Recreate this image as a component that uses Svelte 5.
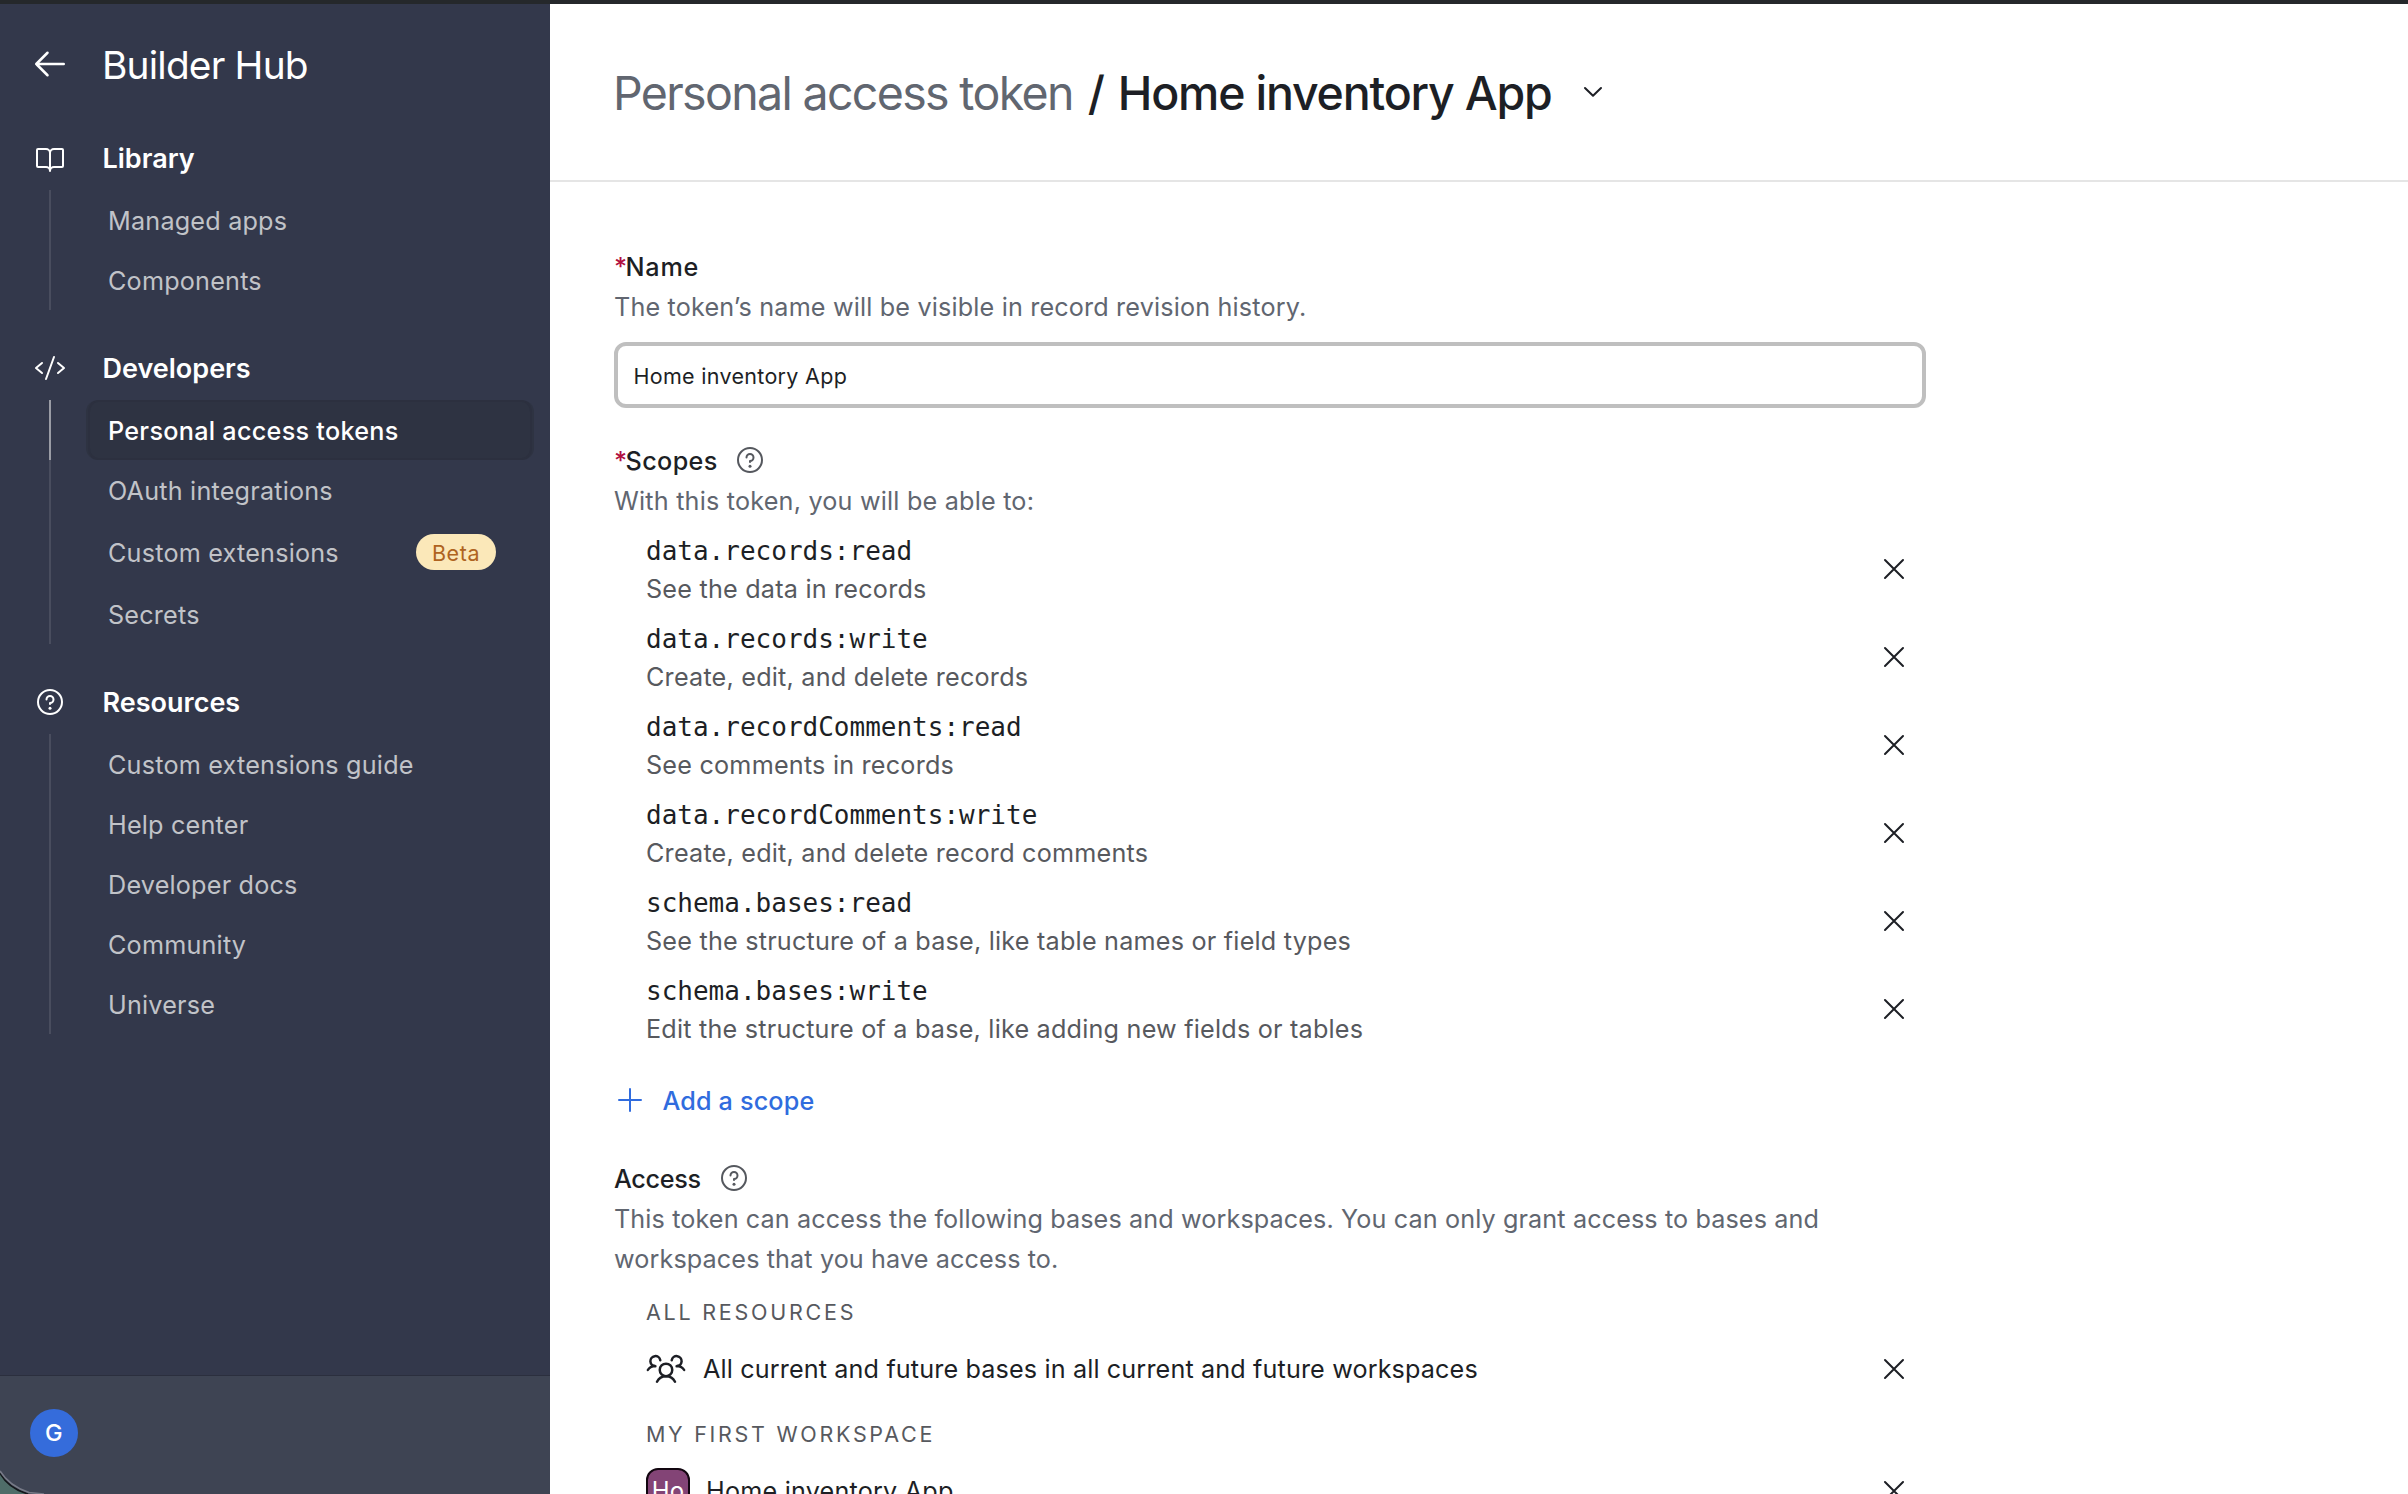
<script>
  const groups = [
    {
      title: 'Library',
      icon: 'book',
      items: [{ label: 'Managed apps' }, { label: 'Components' }]
    },
    {
      title: 'Developers',
      icon: 'code',
      items: [
        { label: 'Personal access tokens', active: true },
        { label: 'OAuth integrations' },
        { label: 'Custom extensions', badge: 'Beta' },
        { label: 'Secrets' }
      ]
    },
    {
      title: 'Resources',
      icon: 'help',
      items: [
        { label: 'Custom extensions guide' },
        { label: 'Help center' },
        { label: 'Developer docs' },
        { label: 'Community' },
        { label: 'Universe' }
      ]
    }
  ];

  const scopes = [
    { name: 'data.records:read', description: 'See the data in records' },
    { name: 'data.records:write', description: 'Create, edit, and delete records' },
    { name: 'data.recordComments:read', description: 'See comments in records' },
    { name: 'data.recordComments:write', description: 'Create, edit, and delete record comments' },
    { name: 'schema.bases:read', description: 'See the structure of a base, like table names or field types' },
    { name: 'schema.bases:write', description: 'Edit the structure of a base, like adding new fields or tables' }
  ];

  let tokenName = $state('Home inventory App');
</script>

{#snippet icon(name)}
  <svg class="icon icon-{name}" viewBox="0 0 256 256" aria-hidden="true">
    {#if name === 'arrow'}
      <path d="M216 128H40M112 56l-72 72 72 72" />
    {:else if name === 'book'}
      <path d="M128 88a32 32 0 0 1 32-32h64a8 8 0 0 1 8 8v128a8 8 0 0 1-8 8h-64a32 32 0 0 0-32 32M24 192a8 8 0 0 0 8 8h64a32 32 0 0 1 32 32V88a32 32 0 0 0-32-32H32a8 8 0 0 0-8 8z" />
    {:else if name === 'code'}
      <path d="M64 88l-48 40 48 40M192 88l48 40-48 40M160 40L96 216" />
    {:else if name === 'help'}
      <circle cx="128" cy="128" r="96" />
      <path d="M128 144v-8a28 28 0 1 0-28-28" />
      <circle class="dot" cx="128" cy="178" r="12" />
    {:else if name === 'plus'}
      <path d="M40 128h176M128 40v176" />
    {:else if name === 'close'}
      <path d="M200 56L56 200M200 200L56 56" />
    {:else if name === 'people'}
      <circle cx="128" cy="140" r="40" />
      <path d="M196 116a59.8 59.8 0 0 1 48 24M12 140a59.8 59.8 0 0 1 48-24M70.4 216a64.1 64.1 0 0 1 115.2 0M60 116a32 32 0 1 1 31.4-38M164.6 78a32 32 0 1 1 31.4 38" />
    {/if}
  </svg>
{/snippet}

<div class="page">
  <aside class="sidebar">
    <div class="brand">
      {@render icon('arrow')}
      <span>Builder Hub</span>
    </div>

    <nav>
      {#each groups as group}
        <section class="group">
          <div class="group-title">
            {@render icon(group.icon)}
            <span>{group.title}</span>
          </div>
          <ul>
            {#each group.items as item}
              <li class:active={item.active} class:with-badge={item.badge}>
                <div class="item">
                  <span>{item.label}</span>
                  {#if item.badge}<span class="badge">{item.badge}</span>{/if}
                </div>
              </li>
            {/each}
          </ul>
        </section>
      {/each}
    </nav>

    <footer>
      <div class="avatar">G</div>
    </footer>

    <!-- desktop showing behind the rounded window corner -->
    <svg class="corner" viewBox="0 0 44 26" aria-hidden="true">
      <path class="desktop" d="M0 5Q8 20 28 26H0z" />
      <path class="edge" d="M0 5Q8 20 28 26" />
      <path class="rim" d="M0 3Q9 18 29 24.5L44 26" />
    </svg>
  </aside>

  <main>
    <header>
      <span class="crumb">Personal access token</span>
      <span class="slash">/</span>
      <span class="title">Home inventory App</span>
      <svg class="chevron" viewBox="0 0 20 12" aria-hidden="true"><path d="M2 2l8 7.8L18 2" /></svg>
    </header>

    <div class="content">
      <div class="label name-label"><span class="star">*</span>Name</div>
      <p class="hint history">The token’s name will be visible in record revision history.</p>
      <input type="text" bind:value={tokenName} />

      <div class="label scopes-label"><span class="star">*</span>Scopes {@render icon('help')}</div>
      <p class="hint">With this token, you will be able to:</p>

      <div class="scopes">
        {#each scopes as scope}
          <div class="scope">
            <div>
              <code>{scope.name}</code>
              <p>{scope.description}</p>
            </div>
            {@render icon('close')}
          </div>
        {/each}
      </div>

      <div class="add">{@render icon('plus')}<span>Add a scope</span></div>

      <div class="label access-label">Access {@render icon('help')}</div>
      <p class="hint access-hint">
        This token can access the following bases and workspaces. You can only grant access to bases and workspaces that you have access to.
      </p>

      <h3>ALL RESOURCES</h3>
      <div class="resource">
        {@render icon('people')}
        <span class="resource-name all">All current and future bases in all current and future workspaces</span>
        {@render icon('close')}
      </div>
      <h3 class="second">MY FIRST WORKSPACE</h3>
      <div class="resource">
        <div class="base">Ho</div>
        <span class="resource-name">Home inventory App</span>
        {@render icon('close')}
      </div>
    </div>
  </main>
</div>

<style>
  :global(body) {
    overflow: hidden;
    background: #fff;
  }

  .page {
    box-sizing: border-box;
    display: flex;
    height: 1494px;
    overflow: hidden;
    border-top: 4px solid #25282b;
    font-family: Inter, 'Liberation Sans', sans-serif;
    font-size: 25.2px;
    font-weight: 400;
    line-height: 40px;
    letter-spacing: 0.2px;
    color: #1d1f25;
  }

  p,
  h3,
  ul {
    margin: 0;
    padding: 0;
    list-style: none;
  }

  .icon {
    display: block;
    flex: none;
    width: 32px;
    height: 32px;
    fill: none;
    stroke: currentColor;
    stroke-width: 16;
    stroke-linecap: round;
    stroke-linejoin: round;
  }

  .dot {
    fill: currentColor;
    stroke: none;
  }

  .icon-arrow,
  .icon-people {
    width: 40px;
    height: 40px;
  }

  /* Sidebar */
  .sidebar {
    position: relative;
    display: flex;
    flex: none;
    flex-direction: column;
    width: 550px;
    background: #33384b;
    color: #fff;
  }

  .brand {
    display: flex;
    gap: 32px;
    height: 48px;
    padding: 37px 0 0 30px;
    font-size: 38.8px;
    line-height: 47px;
    letter-spacing: -0.8px;
  }

  .icon-arrow {
    margin-top: 3px;
  }

  nav {
    display: flex;
    flex-direction: column;
    gap: 39px;
    padding-top: 50px;
  }

  .group-title {
    display: flex;
    gap: 36.5px;
    height: 51px;
    padding-left: 34px;
    font-size: 27px;
    font-weight: 600;
    letter-spacing: 0;
  }

  .group-title :global(.icon) {
    margin-top: 3px;
  }

  li {
    box-sizing: border-box;
    height: 60px;
    margin-left: 49px;
    padding-left: 35px;
    border-left: 2px solid #494d5e;
    color: #c1c3c8;
  }

  .with-badge {
    height: 64px;
  }

  .item {
    box-sizing: border-box;
    display: flex;
    align-items: center;
    justify-content: space-between;
    width: 448px;
    height: 100%;
    padding: 2px 36px 0 20px;
    border: solid transparent;
    border-width: 0 2px;
    border-radius: 12px;
  }

  .active {
    border-color: #9a9ca5;
    font-weight: 500;
    letter-spacing: 0.28px;
    color: #fff;
  }

  .active .item {
    background: #2e3342;
    box-shadow: inset 0 0 0 2px #2c303f;
  }

  .badge {
    box-sizing: border-box;
    width: 80px;
    height: 36px;
    margin-top: -2px;
    border-radius: 18px;
    background: #fbe8b9;
    font-size: 21.5px;
    line-height: 38px;
    letter-spacing: 0.6px;
    text-align: center;
    color: #af6320;
  }

  footer {
    box-sizing: border-box;
    height: 119px;
    margin-top: auto;
    padding: 33px 0 0 30px;
    border-top: 1px solid #2b2f3e;
    background: #3e4453;
  }

  .avatar {
    width: 48px;
    height: 48px;
    border-radius: 50%;
    background: #356cdb;
    font-size: 23.5px;
    font-weight: 500;
    line-height: 47px;
    text-align: center;
  }

  .corner {
    position: absolute;
    bottom: 0;
    left: 0;
    width: 44px;
    height: 26px;
    fill: none;
  }

  .desktop {
    fill: #4f6d69;
  }

  .edge {
    stroke: #14181c;
    stroke-width: 1.6;
  }

  .rim {
    stroke: #777a87;
    stroke-width: 1.6;
  }

  /* Main column */
  main {
    flex: 1;
    min-width: 0;
  }

  header {
    box-sizing: border-box;
    display: flex;
    height: 178px;
    padding: 59px 0 0 63px;
    border-bottom: 2px solid #e5e5e5;
    font-size: 46.5px;
    font-weight: 500;
    line-height: 60px;
    letter-spacing: -1.21px;
    white-space: nowrap;
  }

  .crumb {
    font-weight: 400;
    letter-spacing: -1.66px;
    color: #616670;
  }

  .slash {
    width: 30px;
    margin-left: 15px;
  }

  .chevron {
    width: 20px;
    height: 12px;
    margin: 23px 0 0 31px;
    fill: none;
    stroke: #1d1f25;
    stroke-width: 2;
    stroke-linecap: round;
    stroke-linejoin: round;
  }

  .content {
    width: 1312px;
    padding: 65px 0 0 64px;
  }

  .label {
    display: flex;
    height: 40px;
    font-weight: 500;
    letter-spacing: 0.38px;
  }

  .label :global(.icon) {
    margin: 3px 0 0 16.5px;
    color: #55585e;
  }

  .star {
    width: 11.5px;
    color: #b10f41;
  }

  .name-label {
    letter-spacing: 0.8px;
  }

  .hint {
    color: #616670;
  }

  .history {
    letter-spacing: 0.16px;
  }

  .access-hint {
    letter-spacing: 0.11px;
  }

  input {
    box-sizing: border-box;
    display: block;
    width: 1312px;
    height: 66px;
    margin: 15px 0 33px;
    padding: 2px 15.5px 0;
    border: 4px solid #bfbfbf;
    border-radius: 12px;
    outline: 0;
    background: #fff;
    font: 400 21.5px/56px Inter, 'Liberation Sans', sans-serif;
    letter-spacing: 0.3px;
    color: #1d1f25;
  }

  .scopes {
    padding-top: 4px;
  }

  .scope {
    display: flex;
    align-items: center;
    justify-content: space-between;
    height: 88px;
    padding: 0 16px 0 32px;
  }

  .scope code {
    display: block;
    margin-top: 1px;
    padding-top: 1px;
    font: 400 26px/38px 'DejaVu Sans Mono', monospace;
    letter-spacing: 0;
  }

  .scope p {
    line-height: 38px;
    letter-spacing: 0.21px;
    color: #57595e;
  }

  .add {
    display: flex;
    gap: 16.5px;
    height: 40px;
    margin-top: 28px;
    font-weight: 500;
    letter-spacing: 0.15px;
    color: #306cde;
  }

  .add :global(.icon) {
    margin-top: 3px;
  }

  .access-label {
    margin-top: 38px;
    letter-spacing: -0.3px;
  }

  .access-label :global(.icon) {
    margin-left: 17.5px;
  }

  h3 {
    margin: 13px 0 17px 32px;
    font-size: 21.5px;
    font-weight: 400;
    line-height: 40px;
    letter-spacing: 2.75px;
    color: #57595e;
  }

  h3.second {
    margin-top: 25px;
    letter-spacing: 2.7px;
  }

  .resource {
    display: flex;
    align-items: center;
    height: 40px;
    padding: 0 16px 0 32px;
  }

  .resource-name {
    flex: 1;
    margin-left: 16px;
  }

  .resource-name.all {
    margin-left: 17px;
    letter-spacing: 0.13px;
  }

  .resource :global(.icon-people) {
    margin-top: -2px;
  }

  .base {
    box-sizing: border-box;
    width: 44px;
    height: 44px;
    margin-top: -2px;
    border: 2px solid #120610;
    border-radius: 12px;
    background: #834476;
    font-size: 24px;
    line-height: 42px;
    text-align: center;
    color: #fff;
  }
</style>
